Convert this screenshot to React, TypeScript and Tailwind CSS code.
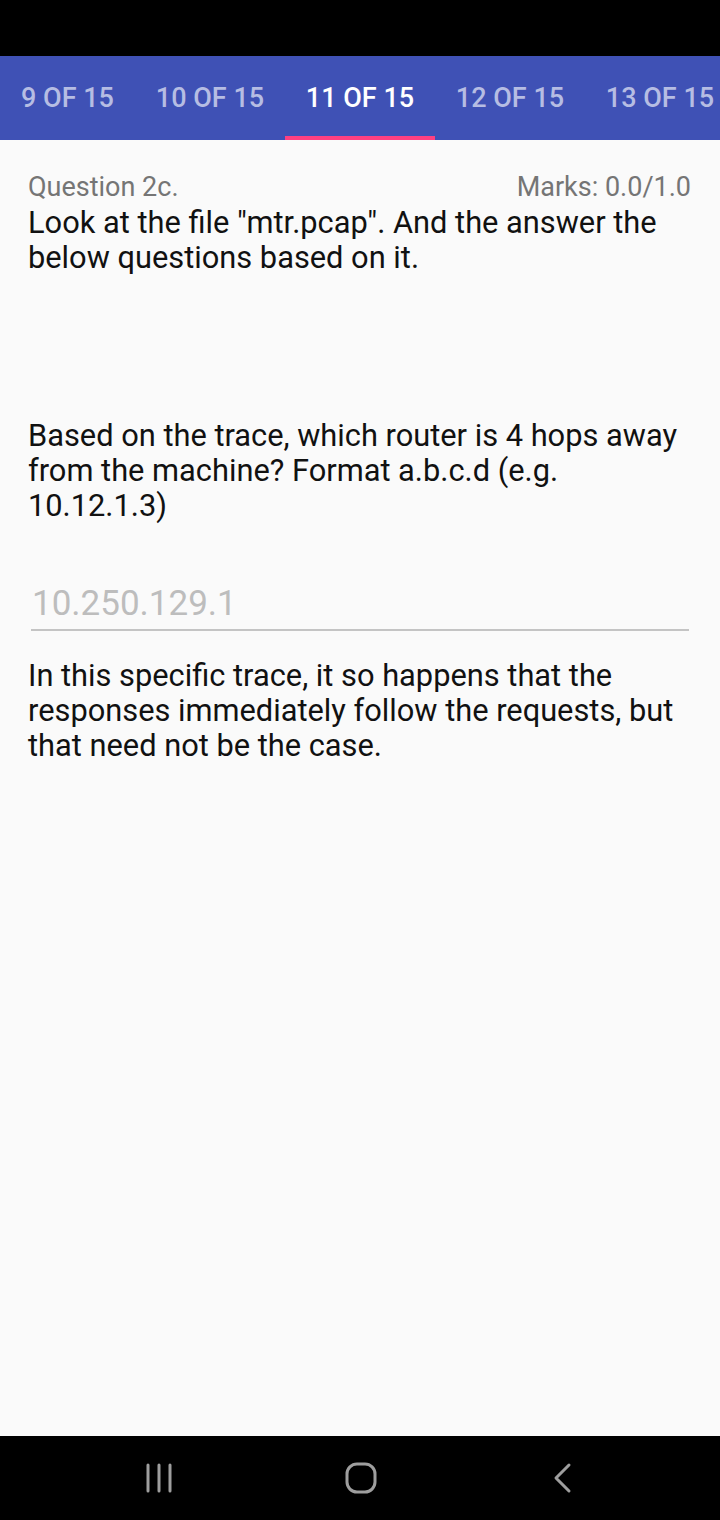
export default function App() {
  const tabs = [
    { label: "9 OF 15", w: "w-[135px]" },
    { label: "10 OF 15", w: "w-[150px]" },
    { label: "11 OF 15", w: "w-[150px]", active: true },
    { label: "12 OF 15", w: "w-[150px]" },
    { label: "13 OF 15", w: "w-[150px]" },
  ];

  return (
    <div
      className="w-[720px] h-[1520px] flex flex-col bg-[#fafafa] overflow-hidden"
      style={{ fontFamily: "Roboto, 'Noto Sans', sans-serif" }}
    >
      {/* status bar */}
      <div className="h-[56px] bg-black shrink-0" />

      {/* tabs */}
      <div className="h-[84px] bg-[#3f51b5] flex shrink-0 overflow-hidden">
        {tabs.map((t) => (
          <div
            key={t.label}
            className={`${t.w} shrink-0 h-full flex flex-col items-center justify-end`}
          >
            <div
              className={`flex-1 flex items-center pt-[4px] text-[27px] font-medium ${
                t.active ? "text-white" : "text-[#b6bde3]"
              }`}
            >
              {t.label}
            </div>
            <div className={`h-[4px] w-full ${t.active ? "bg-[#ff4081]" : ""}`} />
          </div>
        ))}
      </div>

      {/* content */}
      <div className="flex-1 px-[28px] pt-[32px] text-[#1a1a1a]">
        <div className="flex justify-between text-[27px] leading-[30px] text-[#757575] pr-[1px]">
          <span>Question 2c.</span>
          <span>Marks: 0.0/1.0</span>
        </div>
        <p className="mt-[3px] text-[30.8px] leading-[35px] text-[#111]">
          Look at the file "mtr.pcap". And the answer the below questions based on it.
        </p>

        <p className="mt-[143px] text-[30.8px] leading-[35px] text-[#111]">
          Based on the trace, which router is 4 hops away from the machine? Format a.b.c.d (e.g. 10.12.1.3)
        </p>

        <div className="mt-[60px] mx-[3px] border-b-2 border-[#c4c4c4] pb-[4px]">
          <div className="text-[35px] leading-[42px] text-[#bdbdbd] pl-[1px]">10.250.129.1</div>
        </div>

        <p className="mt-[27px] text-[30.8px] leading-[35px] text-[#111]">
          In this specific trace, it so happens that the responses immediately follow the requests, but that need not be the case.
        </p>
      </div>

      {/* nav bar */}
      <div className="h-[84px] bg-black shrink-0 flex items-center">
        <svg width="28" height="30" viewBox="0 0 28 30" className="ml-[145px]">
          <g stroke="#9e9e9e" strokeWidth="3" strokeLinecap="round">
            <line x1="3" y1="2" x2="3" y2="28" />
            <line x1="14" y1="2" x2="14" y2="28" />
            <line x1="25" y1="2" x2="25" y2="28" />
          </g>
        </svg>
        <svg width="32" height="32" viewBox="0 0 32 32" className="ml-[172px]">
          <rect x="2" y="2" width="28" height="28" rx="10" fill="none" stroke="#9e9e9e" strokeWidth="3" />
        </svg>
        <svg width="20" height="32" viewBox="0 0 20 32" className="ml-[176px]">
          <polyline points="16,3 3,16 16,29" fill="none" stroke="#9e9e9e" strokeWidth="3" strokeLinecap="round" strokeLinejoin="round" />
        </svg>
      </div>
    </div>
  );
}
